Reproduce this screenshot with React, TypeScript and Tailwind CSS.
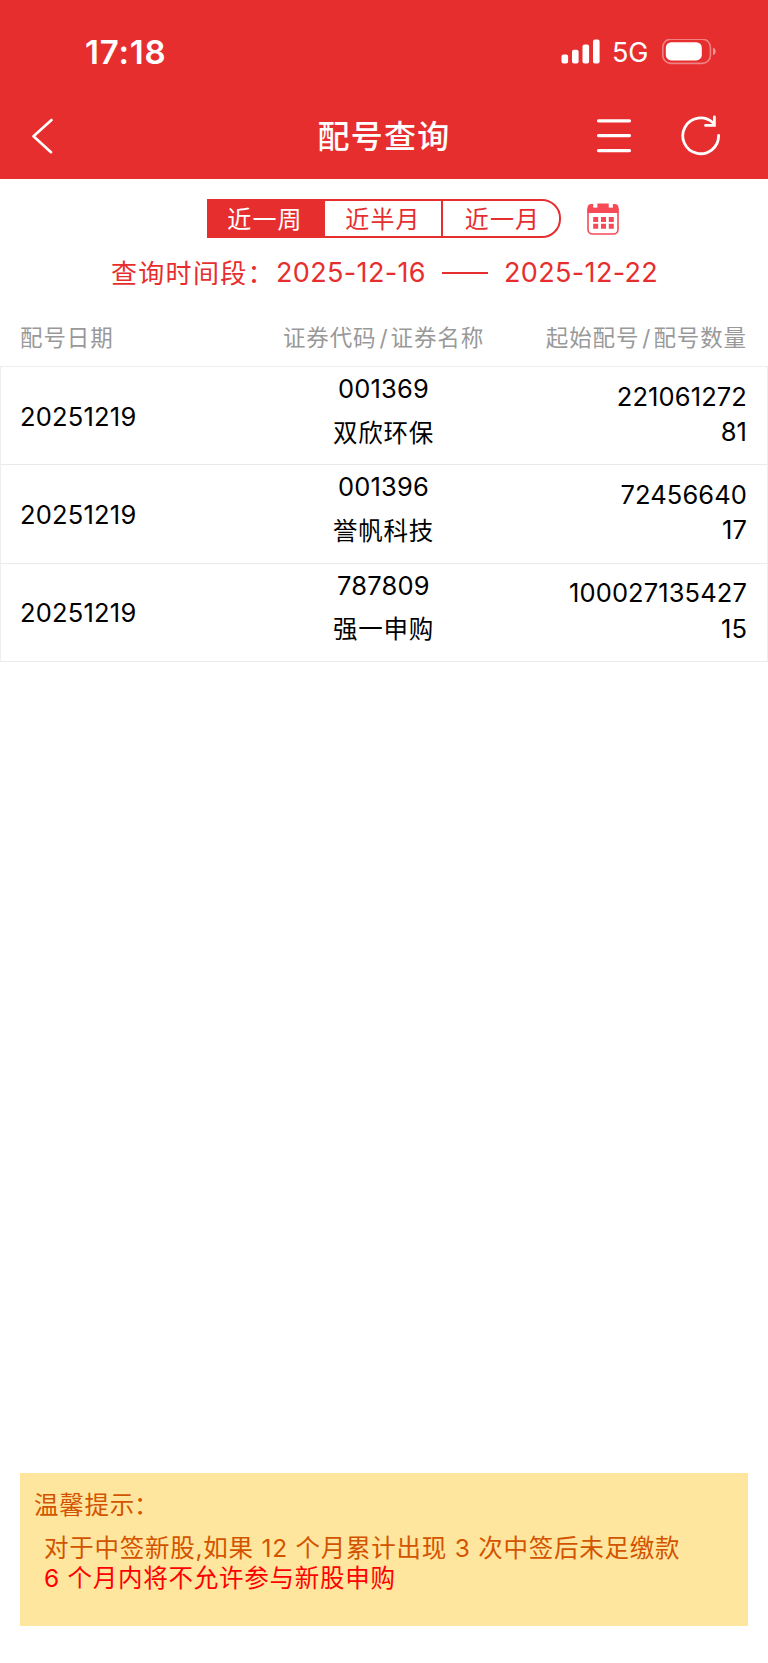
import type { ReactNode } from 'react'

interface Allotment {
  date: string
  code: string
  name: string
  start: string
  count: string
}

const allotments: Allotment[] = [
  { date: '20251219', code: '001369', name: '双欣环保', start: '221061272', count: '81' },
  { date: '20251219', code: '001396', name: '誉帆科技', start: '72456640', count: '17' },
  { date: '20251219', code: '787809', name: '强一申购', start: '100027135427', count: '15' },
]

function StatusBar() {
  return (
    <div className="flex h-[103px] justify-between pr-[52px] pl-[85px] text-white">
      <div className="mt-[32px] h-10 text-[33px] leading-10 font-semibold tracking-[0.8px]">17:18</div>
      <div className="mt-[32px] flex h-10 items-center">
        <svg className="h-[26px] w-[40px]" viewBox="0 0 40 26" fill="currentColor">
          <rect x="0.5" y="15.5" width="6.6" height="9" rx="2" />
          <rect x="11" y="10.7" width="6.6" height="13.8" rx="2" />
          <rect x="21.5" y="5.5" width="6.6" height="19" rx="2" />
          <rect x="32" y="0.5" width="6.6" height="24" rx="2" />
        </svg>
        <div className="mt-px ml-[11px] w-[38px] text-[27px] leading-10 tracking-[-0.1px]">5G</div>
        <svg className="ml-[12px] h-[26px] w-[54px]" viewBox="0 0 54 26" fill="none">
          <rect x="0.8" y="0.2" width="47.6" height="24.2" rx="8" stroke="#fff" strokeOpacity="0.4" strokeWidth="1.6" />
          <rect x="3.8" y="3.2" width="36" height="18.2" rx="5.5" fill="#fff" />
          <path d="M51 8.6c1.8.8 2.6 2.2 2.6 3.8S52.8 15.4 51 16.2z" fill="#fff" fillOpacity="0.5" />
        </svg>
      </div>
    </div>
  )
}

function NavBar() {
  return (
    <div className="grid h-[67px] grid-cols-3 items-center text-white">
      <svg className="-mt-px ml-[31px] h-[36px] w-[24px]" viewBox="0 0 24 36" fill="none" stroke="currentColor" strokeWidth="2.6" strokeLinecap="round" strokeLinejoin="round">
        <path d="M20.5 2L2.5 18.2L20 34.2" />
      </svg>
      <h1 className="mt-px text-center text-[32px] leading-[44px] font-medium tracking-[1.2px] whitespace-nowrap">配号查询</h1>
      <div className="-mt-px flex items-center justify-end pr-[46px]">
        <svg className="h-[36px] w-[36px]" viewBox="0 0 36 36" fill="none" stroke="currentColor" strokeWidth="3.2" strokeLinecap="round">
          <path d="M2.5 2.8H33.5M2.5 17.6H33.5M2.5 32.6H33.5" />
        </svg>
        <svg className="ml-[48px] h-[42px] w-[42px]" viewBox="0 0 42 42" fill="none" stroke="currentColor" strokeWidth="2.8">
          <path d="M38.6 20.5A17.9 17.9 0 1 1 33 7.8" strokeLinecap="round" />
          <path d="M34.4 2V10.4H25.5" strokeLinecap="round" />
        </svg>
      </div>
    </div>
  )
}

function CalendarIcon() {
  return (
    <svg className="h-[32px] w-[32px]" viewBox="0 0 32 32" fill="none">
      <rect x="1" y="2.5" width="30" height="28.5" rx="4.5" stroke="#f64a57" strokeWidth="1.6" />
      <path d="M0.5 10V5Q0.5 1 4.5 1H6.3V4.5H10.3V0.5H21.8V4.5H25.8V1H27.5Q31.5 1 31.5 5V10Z" fill="#f64a57" />
      <path d="M6.3 0.5H10.3V4.3H6.3ZM21.8 0.5H25.8V4.3H21.8Z" fill="#fff" />
      <path d="M6.2 14h5v5h-5zM14 14h5v5h-5zM21.8 14h5v5h-5zM6.2 20.8h5v5h-5zM14 20.8h5v5h-5zM21.8 20.8h5v5h-5z" fill="#f64a57" />
    </svg>
  )
}

function Tab({ active, children }: { active?: boolean; children: ReactNode }) {
  return (
    <button
      className={
        active
          ? 'w-[114px] bg-[#e72e2f] pr-[2px] text-center text-white'
          : 'w-[118px] border-l-2 border-[#e72e2f] text-center last:pl-[3px]'
      }
    >
      {children}
    </button>
  )
}

function Slash() {
  return <span className="mr-[2px] ml-[3px]">/</span>
}

export default function App() {
  return (
    <div className="flex h-[1663px] w-[768px] flex-col bg-white font-[Inter,'Noto_Sans_CJK_SC',sans-serif] text-black">
      <header className="h-[179px] bg-[#e72e2f]">
        <StatusBar />
        <NavBar />
      </header>

      <section className="text-[#e72e2f]">
        <div className="flex items-center pt-[20px] pl-[207px]">
          <div className="flex h-[39px] w-[354px] overflow-hidden rounded-r-[19px] border-2 border-[#e72e2f] text-[24px] leading-[37px] tracking-[1.2px]">
            <Tab active>近一周</Tab>
            <Tab>近半月</Tab>
            <Tab>近一月</Tab>
          </div>
          <div className="ml-[26px]">
            <CalendarIcon />
          </div>
        </div>
        <div className="mt-[15px] flex h-[40px] items-center pl-[111px] text-[27px] leading-[40px] tracking-[0.35px] whitespace-nowrap">
          <span className="mt-px w-[165px] text-[26px] tracking-[1.3px]">查询时间段：</span>
          <span className="w-[151px]">2025-12-16</span>
          <span className="mr-[16px] ml-[15px] h-[2px] w-[46px] bg-[#e72e2f]" />
          <span>2025-12-22</span>
        </div>
      </section>

      <div className="mt-[25px] grid h-[48px] grid-cols-3 pr-[21px] pl-[20px] text-[22.5px] leading-[39px] tracking-[0.9px] whitespace-nowrap text-[#999]">
        <span>配号日期</span>
        <span className="text-center">
          证券代码
          <Slash />
          证券名称
        </span>
        <span className="text-right">
          起始配号
          <Slash />
          配号数量
        </span>
      </div>

      <main className="border-x border-t border-[#eee] text-[25.5px] tracking-[0.2px]">
        {allotments.map((item) => (
          <div key={item.code} className="grid h-[98.4px] grid-cols-3 border-b border-[#eaeaea] pr-[20px] pl-[19px]">
            <div className="pt-[33.5px] leading-[32px]">{item.date}</div>
            <div className="pt-[5px] text-center">
              <div className="leading-[34px]">{item.code}</div>
              <div className="mt-[9.5px] text-[24.5px] leading-[34px] tracking-[0.7px]">{item.name}</div>
            </div>
            <div className="pt-[11.6px] text-right leading-[35.5px] tracking-[0.1px]">
              <div>{item.start}</div>
              <div>{item.count}</div>
            </div>
          </div>
        ))}
      </main>

      <footer className="mx-[20px] mt-auto mb-[37px] h-[153px] bg-[#ffe69e] pt-[14px] pl-[14px] text-[24.5px] leading-[36px] tracking-[0.75px] whitespace-nowrap text-[#d35400]">
        <p>
          温馨提示<span className="-ml-px">：</span>
        </p>
        <p className="mt-[10px] ml-[10px] leading-[30px]">对于中签新股,如果 12 个月累计出现 3 次中签后未足缴款</p>
        <p className="ml-[10px] leading-[31px] text-[#ff0000]">6 个月内将不允许参与新股申购</p>
      </footer>
    </div>
  )
}
